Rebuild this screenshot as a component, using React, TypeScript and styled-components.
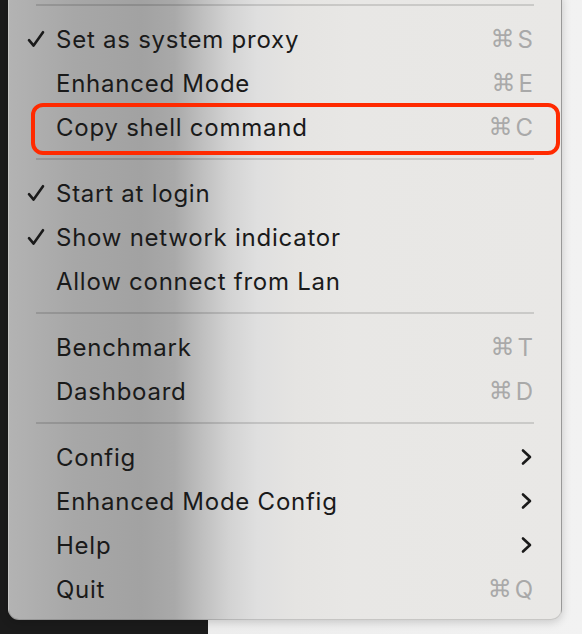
import React from "react";
import styled, { createGlobalStyle } from "styled-components";

const GlobalStyle = createGlobalStyle`
  html, body { margin: 0; padding: 0; }
  body {
    width: 582px;
    height: 634px;
    overflow: hidden;
    font-family: Inter, "Noto Sans", sans-serif;
  }
`;

const Desktop = styled.div`
  width: 582px;
  height: 634px;
  overflow: hidden;
  background: linear-gradient(to right, #1b1b1b 0, #1b1b1b 208px, #ededed 208px, #f2f2f2 100%);
  display: flex;
  flex-direction: column;
`;

const Menu = styled.div`
  margin: -5px 0 0 8px;
  width: 554px;
  box-sizing: border-box;
  padding-bottom: 8px;
  border-radius: 0 0 11px 11px;
  border: 1px solid rgba(0, 0, 0, 0.14);
  border-top: none;
  box-shadow: 0 2px 10px rgba(0, 0, 0, 0.18);
  background: linear-gradient(
    to right,
    #b3b3b3 0%,
    #a7a7a7 12%,
    #a2a2a2 24%,
    #a9a9a9 30%,
    #bfbfbf 35%,
    #d3d3d3 40%,
    #dfdfdf 45%,
    #e5e4e2 52%,
    #e8e7e5 62%,
    #e9e8e6 100%
  );
`;

const Separator = styled.div`
  height: 2px;
  margin: 9px 27px 11px 27px;
  background: rgba(0, 0, 0, 0.13);
`;

const Row = styled.div`
  position: relative;
  height: 44px;
  display: flex;
  align-items: center;
  padding: 0 28px 0 18px;
  color: #1a1a1a;
  font-size: 24px;
  letter-spacing: 0.75px;
`;

const CheckCell = styled.span`
  width: 29px;
  flex: 0 0 29px;
  display: flex;
  align-items: center;
`;

const Label = styled.span`
  flex: 1;
  white-space: nowrap;
`;

const Shortcut = styled.span`
  display: flex;
  align-items: center;
  gap: 3px;
  color: #a9a9a9;
  font-size: 24px;
  letter-spacing: 0;
`;

const CmdGlyph = styled.span`
  font-family: "DejaVu Sans", sans-serif;
  font-size: 24px;
`;

const Highlight = styled.div`
  position: absolute;
  top: -2px;
  bottom: -6px;
  left: 22px;
  right: 1px;
  border: 4px solid #ff2a00;
  border-radius: 12px;
  pointer-events: none;
`;

const Check = () => (
  <svg width="18" height="18" viewBox="0 0 18 18">
    <path
      d="M2 10.2 L6.6 15.6 L16 2.2"
      fill="none"
      stroke="#1a1a1a"
      strokeWidth="2.6"
      strokeLinecap="round"
      strokeLinejoin="round"
    />
  </svg>
);

const Chevron = () => (
  <svg width="13" height="18" viewBox="0 0 13 18">
    <path
      d="M3 2.5 L10 9 L3 15.5"
      fill="none"
      stroke="#1a1a1a"
      strokeWidth="2.6"
      strokeLinecap="round"
      strokeLinejoin="round"
    />
  </svg>
);

type Item = {
  label: string;
  checked?: boolean;
  key?: string;
  submenu?: boolean;
  highlight?: boolean;
};

const groups: Item[][] = [
  [
    { label: "Set as system proxy", checked: true, key: "S" },
    { label: "Enhanced Mode", key: "E" },
    { label: "Copy shell command", key: "C", highlight: true },
  ],
  [
    { label: "Start at login", checked: true },
    { label: "Show network indicator", checked: true },
    { label: "Allow connect from Lan" },
  ],
  [
    { label: "Benchmark", key: "T" },
    { label: "Dashboard", key: "D" },
  ],
  [
    { label: "Config", submenu: true },
    { label: "Enhanced Mode Config", submenu: true },
    { label: "Help", submenu: true },
    { label: "Quit", key: "Q" },
  ],
];

const MenuRow = ({ item }: { item: Item }) => (
  <Row>
    <CheckCell>{item.checked && <Check />}</CheckCell>
    <Label>{item.label}</Label>
    {item.key && (
      <Shortcut>
        <CmdGlyph>⌘</CmdGlyph>
        {item.key}
      </Shortcut>
    )}
    {item.submenu && <Chevron />}
    {item.highlight && <Highlight />}
  </Row>
);

export default function App() {
  return (
    <>
      <GlobalStyle />
      <Desktop>
        <Menu>
          {groups.map((g, gi) => (
            <React.Fragment key={gi}>
              <Separator />
              {g.map((item) => (
                <MenuRow key={item.label} item={item} />
              ))}
            </React.Fragment>
          ))}
        </Menu>
      </Desktop>
    </>
  );
}
